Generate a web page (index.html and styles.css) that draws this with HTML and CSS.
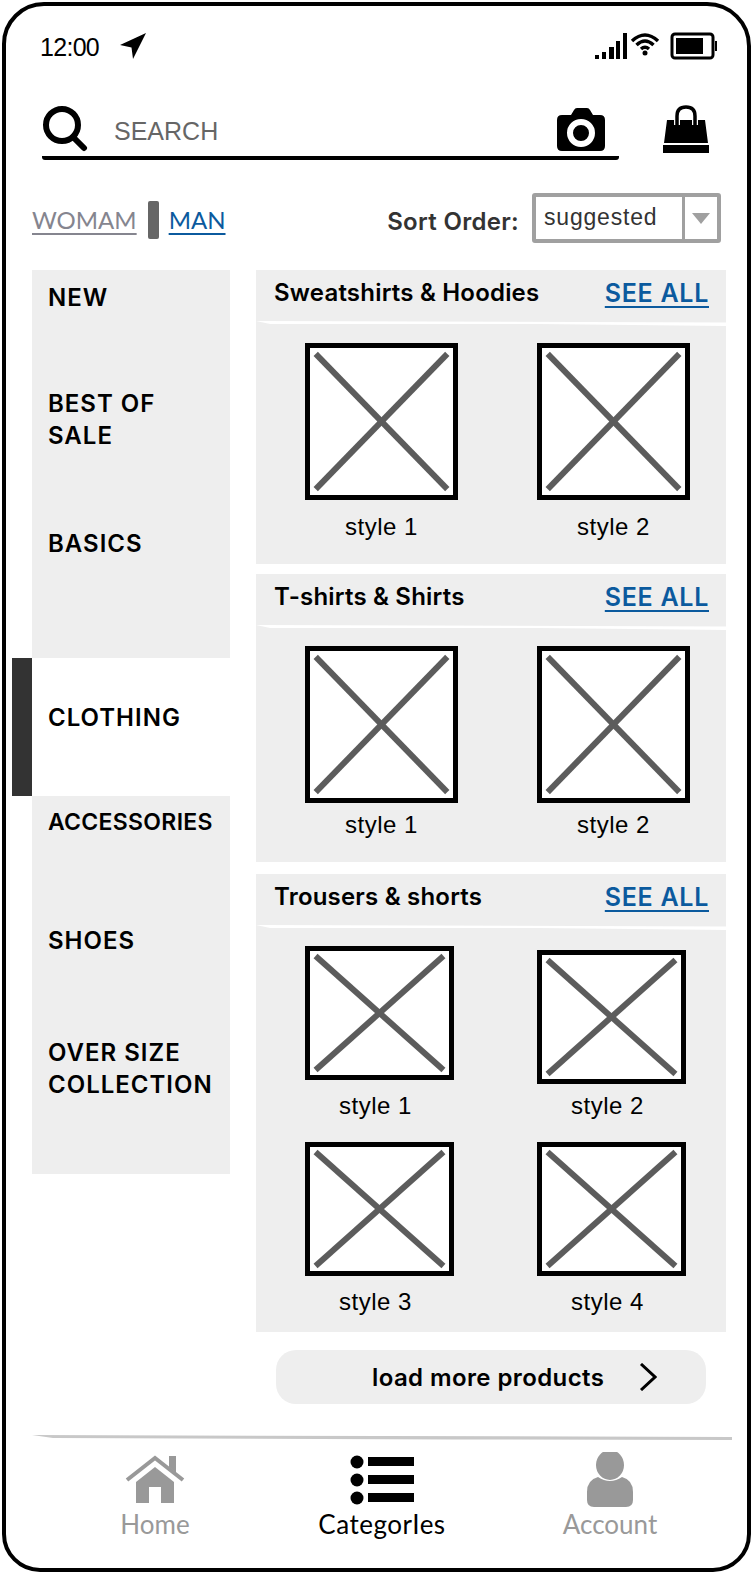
FILE: index.html
```html
<!DOCTYPE html>
<html>

<head>
	<title>Categories</title>
	<link rel="stylesheet" href="styles.css">
</head>

<body>
	<div class="phone">
		<div class="status">
			<span class="time">12:00</span>
			<svg class="locate" width="28" height="28" viewBox="0 0 28 28"><path d="M1 13 L27 1 L14 27 L12.5 15.5 Z"></path></svg>
			<span class="spacer"></span>
			<svg width="34" height="28" viewBox="0 0 34 28"><rect x="1" y="23" width="4" height="4"></rect><rect x="8" y="20" width="4" height="7"></rect><rect x="15" y="15" width="5" height="12"></rect><rect x="22" y="9" width="4" height="18"></rect><rect x="29" y="1" width="4" height="26"></rect></svg>
			<svg class="wifi" width="30" height="24" viewBox="0 0 30 24"><path d="M2 9 Q15 -3 28 9 M6.5 13 Q15 5 23.500 13 M11 17 Q15 13.500 19 17"></path><circle cx="15" cy="21" r="2.500"></circle></svg>
			<svg class="battery" width="48" height="28" viewBox="0 0 48 28"><rect x="2" y="2" width="41" height="24" rx="3"></rect><rect class="fill" x="6" y="6" width="27" height="16"></rect><path class="fill" d="M45 9 H47 V19 H45 Z"></path></svg>
		</div>

		<div class="search_row">
			<div class="search">
				<svg class="glass" width="46" height="46" viewBox="0 0 46 46"><circle cx="20" cy="19" r="16"></circle><line x1="31" y1="31" x2="42" y2="42"></line></svg>
				<span class="search_text">SEARCH</span>
				<svg class="camera" width="48" height="44" viewBox="0 0 48 44"><path d="M5 7 H14 L17 2 Q18 0 20 0 H30 Q32 0 33 2 L36 7 H43 Q48 7 48 12 V38 Q48 43 43 43 H5 Q0 43 0 38 V12 Q0 7 5 7 Z"></path><circle class="lens" cx="24" cy="25" r="11"></circle></svg>
			</div>
			<svg class="bag" width="48" height="48" viewBox="0 0 48 48"><path class="handle" d="M15 20 V11 Q15 2 24 2 Q33 2 33 11 V20"></path><path d="M5 15 H12 V20 H18 V15 H30 V20 H36 V15 H43 L46 38 H2 Z"></path><rect x="1" y="40" width="46" height="8"></rect></svg>
		</div>

		<div class="toolbar">
			<a class="gender off">WOMAM</a>
			<span class="gender_sep"></span>
			<a class="gender on">MAN</a>
			<span class="spacer"></span>
			<span class="sort_label">Sort Order:</span>
			<div class="select">
				<span class="select_value">suggested</span>
				<span class="select_arrow"><i></i></span>
			</div>
		</div>

		<div class="content">
			<div class="menu">
				<div class="menu_item item_new">NEW</div>
				<div class="menu_item item_best">BEST OF<br>SALE</div>
				<div class="menu_item item_basics">BASICS</div>
				<div class="menu_item item_active">CLOTHING</div>
				<div class="menu_item item_acc">ACCESSORIES</div>
				<div class="menu_item item_shoes">SHOES</div>
				<div class="menu_item item_over">OVER SIZE<br>COLLECTION</div>
			</div>

			<div class="main">
				<section class="group">
					<div class="group_head"><h2>Sweatshirts &amp; Hoodies</h2><a class="see_all">SEE ALL</a></div>
					<div class="group_line"></div>
					<div class="products">
						<div class="product"><div class="thumb"><svg viewBox="0 0 100 100" preserveAspectRatio="none"><line x1="4" y1="4" x2="96" y2="96" vector-effect="non-scaling-stroke"></line><line x1="96" y1="4" x2="4" y2="96" vector-effect="non-scaling-stroke"></line></svg></div><p>style 1</p></div>
						<div class="product"><div class="thumb"><svg viewBox="0 0 100 100" preserveAspectRatio="none"><line x1="4" y1="4" x2="96" y2="96" vector-effect="non-scaling-stroke"></line><line x1="96" y1="4" x2="4" y2="96" vector-effect="non-scaling-stroke"></line></svg></div><p>style 2</p></div>
					</div>
				</section>

				<section class="group group_mid">
					<div class="group_head"><h2>T-shirts &amp; Shirts</h2><a class="see_all">SEE ALL</a></div>
					<div class="group_line"></div>
					<div class="products">
						<div class="product"><div class="thumb"><svg viewBox="0 0 100 100" preserveAspectRatio="none"><line x1="4" y1="4" x2="96" y2="96" vector-effect="non-scaling-stroke"></line><line x1="96" y1="4" x2="4" y2="96" vector-effect="non-scaling-stroke"></line></svg></div><p>style 1</p></div>
						<div class="product"><div class="thumb"><svg viewBox="0 0 100 100" preserveAspectRatio="none"><line x1="4" y1="4" x2="96" y2="96" vector-effect="non-scaling-stroke"></line><line x1="96" y1="4" x2="4" y2="96" vector-effect="non-scaling-stroke"></line></svg></div><p>style 2</p></div>
					</div>
				</section>

				<section class="group group_small">
					<div class="group_head"><h2>Trousers &amp; shorts</h2><a class="see_all">SEE ALL</a></div>
					<div class="group_line"></div>
					<div class="products">
						<div class="product"><div class="thumb"><svg viewBox="0 0 100 100" preserveAspectRatio="none"><line x1="4" y1="4" x2="96" y2="96" vector-effect="non-scaling-stroke"></line><line x1="96" y1="4" x2="4" y2="96" vector-effect="non-scaling-stroke"></line></svg></div><p>style 1</p></div>
						<div class="product low"><div class="thumb"><svg viewBox="0 0 100 100" preserveAspectRatio="none"><line x1="4" y1="4" x2="96" y2="96" vector-effect="non-scaling-stroke"></line><line x1="96" y1="4" x2="4" y2="96" vector-effect="non-scaling-stroke"></line></svg></div><p>style 2</p></div>
						<div class="product"><div class="thumb"><svg viewBox="0 0 100 100" preserveAspectRatio="none"><line x1="4" y1="4" x2="96" y2="96" vector-effect="non-scaling-stroke"></line><line x1="96" y1="4" x2="4" y2="96" vector-effect="non-scaling-stroke"></line></svg></div><p>style 3</p></div>
						<div class="product"><div class="thumb"><svg viewBox="0 0 100 100" preserveAspectRatio="none"><line x1="4" y1="4" x2="96" y2="96" vector-effect="non-scaling-stroke"></line><line x1="96" y1="4" x2="4" y2="96" vector-effect="non-scaling-stroke"></line></svg></div><p>style 4</p></div>
					</div>
				</section>

				<button class="load_more" type="button">
					<span>load more products</span>
					<svg width="18" height="28" viewBox="0 0 18 28"><path d="M2 1 L16 14 L2 27"></path></svg>
				</button>
			</div>
		</div>

		<div class="nav_line"></div>

		<nav class="tabs">
			<div class="tab">
				<svg class="tab_icon" width="60" height="48" viewBox="0 0 60 48"><path class="roof" d="M2 24 L30 2 L58 24"></path><path d="M44 0 H51 V17 L44 11 Z"></path><path d="M11 26 L30 11 L49 26 V47 H36 V31 H24 V47 H11 Z"></path></svg>
				<span>Home</span>
			</div>
			<div class="tab tab_on">
				<svg class="tab_icon" width="64" height="50" viewBox="0 0 64 50"><ellipse cx="7" cy="7" rx="6.500" ry="6.500"></ellipse><ellipse cx="7" cy="25" rx="6.500" ry="6.500"></ellipse><ellipse cx="7" cy="43" rx="6.500" ry="6.500"></ellipse><rect x="18" y="2" width="46" height="9"></rect><rect x="18" y="20" width="46" height="9"></rect><rect x="18" y="38" width="46" height="9"></rect></svg>
				<span>CategorIes</span>
			</div>
			<div class="tab">
				<svg class="tab_icon user" width="48" height="56" viewBox="0 0 48 56"><ellipse cx="24" cy="13" rx="14" ry="15"></ellipse><path d="M12 25 Q24 33 36 25 Q47 28 47 40 V48 Q47 55 40 55 H8 Q1 55 1 48 V40 Q1 28 12 25 Z"></path></svg>
				<span>Account</span>
			</div>
		</nav>
	</div>
</body>

</html>
```

FILE: styles.css
```css
* {
	box-sizing: border-box;
}

body {
	margin: 0px;
	background: white;
	font-family: "Inter", "Liberation Sans", sans-serif;
}

.spacer {
	flex: 1;
}

.phone {
	width: 749px;
	height: 1570px;
	margin: 2px;
	border: 4px solid black;
	border-radius: 42px 44px 38px 38px;
	overflow: hidden;
}

/* status bar */

.status {
	display: flex;
	align-items: center;
	height: 80px;
	padding: 0 29px 0 34px;
}

.time {
	margin-top: 3px;
	font-family: "Liberation Sans", sans-serif;
	font-size: 25px;
	letter-spacing: -0.7px;
}

.locate {
	margin-left: 20px;
}

.status .wifi {
	margin: 0 10px 4px 2px;
}

.wifi path {
	fill: none;
	stroke: black;
	stroke-width: 3.5;
}

.battery rect {
	fill: none;
	stroke: black;
	stroke-width: 3;
}

.battery .fill {
	fill: black;
	stroke: none;
}

/* search */

.search_row {
	display: flex;
	align-items: flex-end;
	height: 74px;
	padding-left: 36px;
}

.search {
	display: flex;
	align-items: center;
	width: 577px;
	height: 59px;
	border-bottom: 4px solid black;
	border-radius: 0 0 3px 3px;
	padding-bottom: 4px;
}

.glass {
	margin-top: 4px;
}

.glass circle,
.glass line {
	fill: none;
	stroke: black;
	stroke-width: 6;
	stroke-linecap: round;
}

.search_text {
	margin: 10px 0 0 26px;
	font-family: "Liberation Sans", sans-serif;
	font-size: 25px;
	color: #666;
}

.camera {
	margin-left: auto;
	margin-right: 14px;
	align-self: flex-end;
}

.camera .lens {
	fill: none;
	stroke: white;
	stroke-width: 6;
}

.bag {
	margin: 0 0 7px 43px;
}

.bag .handle {
	fill: none;
	stroke: black;
	stroke-width: 3.5;
}

/* woman / man + sort */

.toolbar {
	display: flex;
	align-items: center;
	height: 60px;
	margin-top: 31px;
	padding: 0 26px 0 26px;
}

.gender {
	margin-bottom: 4px;
	font-family: "Lato", sans-serif;
	font-size: 24px;
	text-decoration: underline;
	text-decoration-thickness: 2px;
	text-underline-offset: 4px;
}

.gender.off {
	color: #85858f;
}

.gender.on {
	color: #0b5a9e;
}

.gender_sep {
	width: 11px;
	height: 38px;
	margin: 0 10px 2px 11px;
	border-radius: 2px;
	background: #666;
}

.sort_label {
	font-size: 24px;
	font-weight: 600;
	letter-spacing: 0.3px;
	color: #333;
	margin-right: 13px;
}

.select {
	display: flex;
	width: 189px;
	height: 50px;
	margin-bottom: 6px;
	border: 4px solid #a0a0a0;
	border-radius: 3px;
}

.select_value {
	flex: 1;
	padding: 7px 0 0 8px;
	font-family: "Liberation Sans", sans-serif;
	font-size: 23px;
	color: #333;
	letter-spacing: 0.8px;
}

.select_arrow {
	display: flex;
	align-items: center;
	justify-content: center;
	width: 35px;
	border-left: 3px solid #a0a0a0;
}

.select_arrow i {
	border: 9px solid transparent;
	border-top: 11px solid #a0a0a0;
	border-bottom: none;
}

/* body columns */

.content {
	display: flex;
	gap: 26px;
	margin-top: 19px;
	padding-left: 26px;
}

.menu {
	width: 198px;
	height: 904px;
	background: #eee;
}

.menu_item {
	position: relative;
	padding: 12px 0 0 16px;
	font-size: 24px;
	font-weight: 600;
	letter-spacing: 1px;
	line-height: 32px;
}

.item_new {
	height: 116px;
}

.item_best {
	height: 139px;
	padding-top: 2px;
}

.item_basics {
	height: 133px;
	padding-top: 3px;
}

.item_active {
	display: flex;
	align-items: center;
	height: 138px;
	padding: 0 0 18px 16px;
	background: white;
}

.item_active:before {
	content: "";
	position: absolute;
	left: -20px;
	top: 0;
	width: 20px;
	height: 138px;
	background: #333;
}

.item_acc {
	height: 129px;
	padding-top: 10px;
	font-size: 23px;
	letter-spacing: 0.3px;
}

.item_shoes {
	height: 112px;
	padding-top: 0;
}

.item_over {
	height: 138px;
	padding-top: 0;
}

.main {
	width: 470px;
}

.group {
	margin-bottom: 10px;
	padding-bottom: 22px;
	background: #eee;
}

.group_mid {
	margin-bottom: 12px;
}

.group_small {
	padding-bottom: 15px;
}

.group_head {
	display: flex;
	justify-content: space-between;
	align-items: center;
	height: 51px;
	padding: 0 17px 6px 18px;
}

h2 {
	margin: 0;
	font-size: 24px;
	font-weight: 600;
	letter-spacing: 0.2px;
}

.see_all {
	font-size: 25px;
	font-weight: 600;
	letter-spacing: 0.7px;
	color: #0b5a9e;
	text-decoration: underline;
	text-decoration-thickness: 2px;
	text-underline-offset: 4px;
}

.group_line {
	height: 5px;
	background: white;
	clip-path: polygon(0 0, 100% 30%, 100% 100%, 60% 60%, 3% 60%);
}

.products {
	display: grid;
	grid-template-columns: 232px 153px;
	padding: 17px 0 0 49px;
}

.group_mid .products {
	padding-top: 16px;
}

.thumb {
	width: 153px;
	height: 157px;
	border: 5px solid black;
	background: white;
}

.thumb svg {
	display: block;
	width: 100%;
	height: 100%;
}

.thumb line {
	stroke: #5c5c5c;
	stroke-width: 6;
}

.product p {
	width: 153px;
	margin: 12px 0 0 0;
	font-family: "Liberation Sans", sans-serif;
	font-size: 24px;
	letter-spacing: 0.5px;
	line-height: 30px;
	text-align: center;
}

.group_mid .product p {
	margin-top: 7px;
}

.group_small .products {
	grid-template-columns: 232px 149px;
	row-gap: 21px;
	padding-top: 16px;
}

.group_small .thumb {
	width: 149px;
	height: 134px;
}

.group_small .product p {
	width: 149px;
	margin-top: 11px;
	padding-right: 8px;
}

.group_small .product.low {
	padding-top: 4px;
}

.group_small .product.low p {
	margin-top: 7px;
}

.load_more {
	display: flex;
	align-items: center;
	width: 430px;
	height: 54px;
	margin: 18px 0 0 20px;
	padding: 0 0 0 96px;
	border: none;
	border-radius: 20px;
	background: #eee;
	font-family: inherit;
	font-size: 24px;
	font-weight: 600;
	letter-spacing: 0.4px;
	color: black;
}

.load_more svg {
	margin-left: 35px;
}

.load_more path {
	fill: none;
	stroke: black;
	stroke-width: 3;
}

/* bottom tabs */

.nav_line {
	width: 700px;
	height: 5px;
	margin: 31px 0 0 26px;
	background: #c8c8c8;
	clip-path: polygon(0 0, 100% 40%, 100% 100%, 60% 90%, 3% 60%);
}

.tabs {
	display: grid;
	grid-template-columns: 298px 156px 300px;
	padding-top: 12px;
}

.tab {
	display: flex;
	flex-direction: column;
	align-items: center;
	height: 92px;
	font-family: "Lato", sans-serif;
	font-size: 26px;
	color: #999;
}

.tab_icon {
	height: 56px;
	fill: #999;
}

.tab_on {
	color: black;
	letter-spacing: 0.5px;
}

.tab_on .tab_icon {
	fill: black;
}

.roof {
	fill: none;
	stroke: #999;
	stroke-width: 4;
}
```
